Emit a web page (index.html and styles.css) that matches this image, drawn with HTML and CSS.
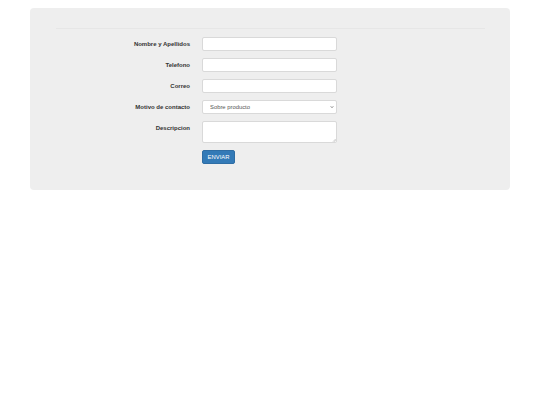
FILE: index.html
```html
<!DOCTYPE html>
<html lang="es">
<head>
<meta charset="utf-8">
<title>Contacto</title>
<link rel="stylesheet" href="styles.css">
</head>
<body>
<div class="page">
  <div class="card">
    <hr class="rule">
    <form class="form">
      <div class="row">
        <label class="label" for="nombre">Nombre y Apellidos</label>
        <input class="control" id="nombre" type="text">
      </div>
      <div class="row">
        <label class="label" for="tel">Telefono</label>
        <input class="control" id="tel" type="text">
      </div>
      <div class="row">
        <label class="label" for="correo">Correo</label>
        <input class="control" id="correo" type="text">
      </div>
      <div class="row">
        <label class="label" for="motivo">Motivo de contacto</label>
        <div class="select-wrap">
          <select class="control select" id="motivo">
            <option>Sobre producto</option>
          </select>
          <svg class="chevron" viewBox="0 0 10 10" width="4" height="4"><path d="M2 3.5 L5 6.5 L8 3.5" fill="none" stroke="#444" stroke-width="1.8"/></svg>
        </div>
      </div>
      <div class="row">
        <label class="label" for="desc">Descripcion</label>
        <div class="area-wrap">
          <textarea class="control area" id="desc"></textarea>
          <svg class="grip" viewBox="0 0 6 6" width="4" height="4"><path d="M5.5 1.5 L1.5 5.5 M5.5 3.5 L3.5 5.5" fill="none" stroke="#9a9a9a" stroke-width="0.8"/></svg>
        </div>
      </div>
      <div class="row">
        <span class="label"></span>
        <button class="btn" type="button">ENVIAR</button>
      </div>
    </form>
  </div>
</div>
</body>
</html>
```
FILE: styles.css
```css
html, body {
  margin: 0;
  padding: 0;
  background: #ffffff;
  font-family: "Liberation Sans", Arial, sans-serif;
  color: #333333;
}
.page {
  padding: 8px 30px 0 30px;
}
.card {
  background: #eeeeee;
  border-radius: 4px;
  padding: 20px 25px 26px 26px;
  height: 182px;
  box-sizing: border-box;
}
.rule {
  margin: 0;
  border: 0;
  border-top: 1px solid #e6e6e6;
  height: 0;
}
.form {
  display: flex;
  flex-direction: column;
  gap: 7px;
  padding-top: 8px;
}
.row {
  display: flex;
  align-items: flex-start;
  gap: 12px;
}
.label {
  width: 134px;
  flex: none;
  text-align: right;
  font-weight: bold;
  font-size: 6px;
  line-height: 9px;
  padding-top: 2.5px;
  color: #333333;
}
.control {
  display: block;
  box-sizing: border-box;
  width: 135px;
  height: 14px;
  margin: 0;
  padding: 2px 5px;
  border: 1px solid #d9d9d9;
  border-radius: 2px;
  background: #ffffff;
  font-family: "Liberation Sans", Arial, sans-serif;
  font-size: 5.85px;
  color: #555555;
  outline: none;
}
.select-wrap, .area-wrap {
  position: relative;
  width: 135px;
}
.select {
  appearance: none;
  -webkit-appearance: none;
  padding: 0 5px 0 7px;
  line-height: 12px;
}
.chevron {
  position: absolute;
  right: 3px;
  top: 5px;
}
.area {
  height: 22px;
  resize: none;
}
.grip {
  position: absolute;
  right: 1px;
  bottom: 1px;
}
.btn {
  display: block;
  box-sizing: border-box;
  height: 14px;
  width: 33px;
  margin: 0;
  padding: 0;
  background: #337ab7;
  border: 1px solid #2e6da4;
  border-radius: 2px;
  color: #ffffff;
  font-family: "Liberation Sans", Arial, sans-serif;
  font-size: 5.85px;
  line-height: 12px;
  text-align: center;
}
```
